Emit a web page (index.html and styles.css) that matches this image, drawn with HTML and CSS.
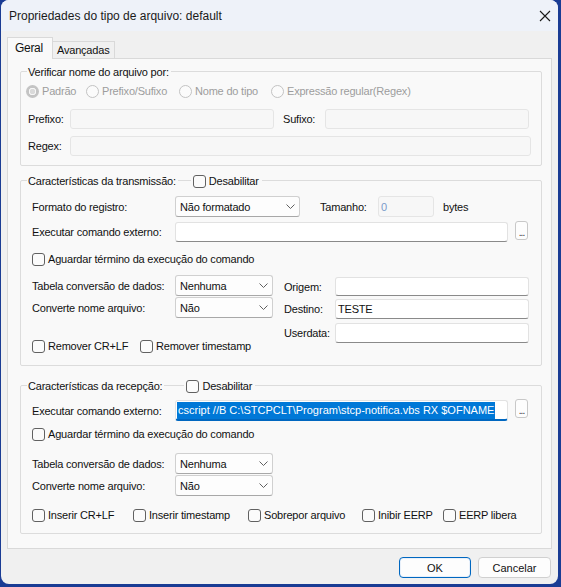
FILE: index.html
```html
<!DOCTYPE html>
<html lang="pt-BR">
<head>
    <meta charset="UTF-8">
    <meta name="viewport" content="width=device-width, initial-scale=1.0">
    <title>Propriedades do tipo de arquivo: default</title>
    <link rel="stylesheet" href="styles.css">
</head>
<body>
    <div class="window">
        <div class="titlebar">
            <span class="title">Propriedades do tipo de arquivo: default</span>
            <span class="close-btn">
                <svg width="12" height="12" viewBox="0 0 12 12"><path d="M1 1L11 11M11 1L1 11" stroke="#1a1a1a" stroke-width="1.1"/></svg>
            </span>
        </div>

        <div class="dialog-body">
            <div class="tabs">
                <div class="tab active">Geral</div>
                <div class="tab">Avançadas</div>
            </div>

            <div class="tab-panel">
                <!-- Verificação do nome do arquivo -->
                <div class="group group-name">
                    <div class="group-head">
                        <span class="group-title">Verificar nome do arquivo por:</span>
                    </div>
                    <div class="group-body">
                        <div class="radio-row">
                            <span class="radio radio-padrao"><span class="dot checked"></span>Padrão</span>
                            <span class="radio radio-prefixo"><span class="dot"></span>Prefixo/Sufixo</span>
                            <span class="radio radio-nome"><span class="dot"></span>Nome do tipo</span>
                            <span class="radio"><span class="dot"></span>Expressão regular(Regex)</span>
                        </div>
                        <div class="row row-prefix">
                            <span class="lbl lbl-short">Prefixo:</span>
                            <span class="input disabled input-half"></span>
                            <span class="lbl lbl-short lbl-suffix">Sufixo:</span>
                            <span class="input disabled input-half"></span>
                        </div>
                        <div class="row row-regex">
                            <span class="lbl lbl-short">Regex:</span>
                            <span class="input disabled input-regex"></span>
                        </div>
                    </div>
                </div>

                <!-- Transmissão -->
                <div class="group group-send">
                    <div class="group-head">
                        <span class="group-title">Características da transmissão:</span>
                        <span class="head-check"><span class="box"></span>Desabilitar</span>
                    </div>
                    <div class="group-body">
                        <div class="row row-format">
                            <span class="lbl lbl-wide">Formato do registro:</span>
                            <span class="combo combo-wide">Não formatado
                                <svg width="9" height="5" viewBox="0 0 9 5"><path d="M0.5 0.5L4.5 4.5L8.5 0.5" fill="none" stroke="#606060"/></svg>
                            </span>
                            <span class="lbl lbl-size">Tamanho:</span>
                            <span class="input disabled input-size">0</span>
                            <span class="unit">bytes</span>
                        </div>
                        <div class="row row-cmd">
                            <span class="lbl lbl-wide">Executar comando externo:</span>
                            <span class="input input-cmd"></span>
                            <span class="browse-btn">...</span>
                        </div>
                        <div class="check-row row-wait">
                            <span class="check"><span class="box"></span>Aguardar término da execução do comando</span>
                        </div>
                        <div class="split">
                            <div class="split-left">
                                <div class="row row-combo">
                                    <span class="lbl lbl-wide">Tabela conversão de dados:</span>
                                    <span class="combo combo-small">Nenhuma
                                        <svg width="9" height="5" viewBox="0 0 9 5"><path d="M0.5 0.5L4.5 4.5L8.5 0.5" fill="none" stroke="#606060"/></svg>
                                    </span>
                                </div>
                                <div class="row row-combo row-next">
                                    <span class="lbl lbl-wide">Converte nome arquivo:</span>
                                    <span class="combo combo-small">Não
                                        <svg width="9" height="5" viewBox="0 0 9 5"><path d="M0.5 0.5L4.5 4.5L8.5 0.5" fill="none" stroke="#606060"/></svg>
                                    </span>
                                </div>
                                <div class="check-row row-remove">
                                    <span class="check check-crlf"><span class="box"></span>Remover CR+LF</span>
                                    <span class="check"><span class="box"></span>Remover timestamp</span>
                                </div>
                            </div>
                            <div class="split-right">
                                <div class="row row-origin">
                                    <span class="lbl lbl-side">Origem:</span>
                                    <span class="input input-side"></span>
                                </div>
                                <div class="row row-dest">
                                    <span class="lbl lbl-side">Destino:</span>
                                    <span class="input input-side">TESTE</span>
                                </div>
                                <div class="row row-user">
                                    <span class="lbl lbl-side">Userdata:</span>
                                    <span class="input input-side"></span>
                                </div>
                            </div>
                        </div>
                    </div>
                </div>

                <!-- Recepção -->
                <div class="group group-recv">
                    <div class="group-head">
                        <span class="group-title">Características da recepção:</span>
                        <span class="head-check"><span class="box"></span>Desabilitar</span>
                    </div>
                    <div class="group-body">
                        <div class="row row-cmd-recv">
                            <span class="lbl lbl-wide">Executar comando externo:</span>
                            <span class="input input-cmd focused"><span class="selection">cscript //B C:\STCPCLT\Program\stcp-notifica.vbs RX $OFNAME</span></span>
                            <span class="browse-btn">...</span>
                        </div>
                        <div class="check-row row-wait-recv">
                            <span class="check"><span class="box"></span>Aguardar término da execução do comando</span>
                        </div>
                        <div class="row row-combo row-table-recv">
                            <span class="lbl lbl-wide">Tabela conversão de dados:</span>
                            <span class="combo combo-small">Nenhuma
                                <svg width="9" height="5" viewBox="0 0 9 5"><path d="M0.5 0.5L4.5 4.5L8.5 0.5" fill="none" stroke="#606060"/></svg>
                            </span>
                        </div>
                        <div class="row row-combo row-next">
                            <span class="lbl lbl-wide">Converte nome arquivo:</span>
                            <span class="combo combo-small">Não
                                <svg width="9" height="5" viewBox="0 0 9 5"><path d="M0.5 0.5L4.5 4.5L8.5 0.5" fill="none" stroke="#606060"/></svg>
                            </span>
                        </div>
                        <div class="check-row row-options">
                            <span class="check opt-crlf"><span class="box"></span>Inserir CR+LF</span>
                            <span class="check opt-stamp"><span class="box"></span>Inserir timestamp</span>
                            <span class="check opt-over"><span class="box"></span>Sobrepor arquivo</span>
                            <span class="check opt-eerp"><span class="box"></span>Inibir EERP</span>
                            <span class="check"><span class="box"></span>EERP libera</span>
                        </div>
                    </div>
                </div>
            </div>

            <div class="footer">
                <button type="button" class="btn btn-default">OK</button>
                <button type="button" class="btn btn-cancel">Cancelar</button>
            </div>
        </div>
    </div>
</body>
</html>
```

FILE: styles.css
```css
body {
    margin: 0;
    background-color: #1a3c94;
    font-family: "Liberation Sans", Arial, sans-serif;
    font-size: 11px;
    letter-spacing: -0.2px;
    color: #111;
}

.window {
    width: 557px;
    height: 584px;
    margin-left: 1px;
    background-color: #f0f0f0;
    border-radius: 8px;
    overflow: hidden;
}

/* Title bar */
.titlebar {
    height: 31px;
    display: flex;
    align-items: center;
    padding-left: 8px;
    background-color: #eef2f9;
}

.title {
    font-size: 12px;
    letter-spacing: 0;
    color: #1a1a1a;
}

.close-btn {
    margin-left: auto;
    margin-right: 7px;
    display: flex;
}

.dialog-body {
    padding: 6px 6px 0 6px;
}

/* Tabs */
.tabs {
    display: flex;
    align-items: flex-end;
    height: 21px;
}

.tab {
    box-sizing: border-box;
    border: 1px solid #d9d9d9;
    border-bottom: none;
}

.tab.active {
    width: 46px;
    height: 22px;
    margin-bottom: -1px;
    padding: 3px 0 0 7px;
    font-size: 12px;
    letter-spacing: -0.3px;
    background-color: #f9f9f9;
    position: relative;
    z-index: 1;
}

.tab:not(.active) {
    width: 62px;
    height: 17px;
    padding: 2px 0 0 4px;
    border-left: none;
    background-color: #f0f0f0;
}

.tab-panel {
    box-sizing: border-box;
    height: 491px;
    padding: 12px 0 0 12px;
    background-color: #f9f9f9;
    border: 1px solid #d9d9d9;
}

/* Group boxes */
.group {
    box-sizing: border-box;
    width: 522px;
    border: 1px solid #dcdcdc;
    border-radius: 2px;
}

.group-name {
    height: 95px;
}

.group-send {
    height: 186px;
    margin-top: 14px;
}

.group-recv {
    height: 149px;
    margin-top: 19px;
}

.group-head {
    display: flex;
    align-items: center;
    height: 16px;
    margin: -8px 0 0 6px;
}

.group-title {
    background-color: #f9f9f9;
    padding: 0 2px 0 1px;
}

.head-check {
    display: flex;
    align-items: center;
    background-color: #f9f9f9;
    padding: 0 3px 0 2px;
    margin-left: 13px;
}

.group-recv .head-check {
    margin-left: 20px;
}

.group-body {
    padding-left: 11px;
}

.group-name .group-body {
    padding-left: 7px;
}

/* Generic rows */
.row {
    display: flex;
    align-items: center;
}

.lbl {
    flex: none;
    white-space: nowrap;
}

.lbl-short {
    width: 42px;
}

.lbl-suffix {
    margin-left: 9px;
}

.lbl-wide {
    width: 143px;
}

.lbl-size {
    width: 58px;
    margin-left: 20px;
}

.lbl-side {
    width: 51px;
}

.unit {
    margin-left: 9px;
}

/* Radios */
.radio-row {
    display: flex;
    align-items: center;
    height: 16px;
    margin: 3px 0 0 -2px;
    color: #9d9d9d;
}

.radio {
    display: flex;
    align-items: center;
    flex: none;
}

.radio-padrao {
    width: 60px;
}

.radio-prefixo {
    width: 93px;
}

.radio-nome {
    width: 92px;
}

.dot {
    box-sizing: border-box;
    width: 13px;
    height: 13px;
    margin-right: 3px;
    border: 1px solid #c3c3c3;
    border-radius: 50%;
    background-color: #fbfbfb;
}

.dot.checked {
    border: none;
    background: radial-gradient(circle, #dadada 0 2.5px, #f7f7f7 3px 3.5px, #c4c4c4 4px);
}

/* Text inputs */
.input {
    box-sizing: border-box;
    display: flex;
    align-items: center;
    height: 20px;
    padding-left: 2px;
    background-color: #fff;
    border: 1px solid #e2e2e2;
    border-bottom-color: #8a8a8a;
    border-radius: 3px;
    white-space: nowrap;
    overflow: hidden;
}

.input.disabled {
    background-color: #f7f7f7;
    border-color: #e5e5e5;
    color: #7b9acb;
}

.row-prefix {
    height: 20px;
    margin-top: 10px;
}

.row-regex {
    height: 20px;
    margin-top: 7px;
}

.input-half {
    width: 204px;
}

.input-regex {
    width: 461px;
}

.input-size {
    width: 56px;
    height: 21px;
}

.input-cmd {
    width: 333px;
}

.input-side {
    width: 194px;
}

.input.focused {
    height: 21px;
    padding-left: 1px;
    border-bottom: 2px solid #0067c0;
}

.selection {
    background-color: #0078d7;
    color: #fff;
    letter-spacing: 0;
    line-height: 17px;
    padding: 0 1px;
}

/* Combo boxes */
.combo {
    box-sizing: border-box;
    display: flex;
    align-items: center;
    justify-content: space-between;
    height: 21px;
    padding: 0 4px 0 4px;
    background-color: #fdfdfd;
    border: 1px solid #d0d0d0;
    border-bottom-color: #a8a8a8;
    border-radius: 3px;
}

.combo-wide {
    width: 125px;
}

.combo-small {
    width: 98px;
}

.browse-btn {
    box-sizing: border-box;
    width: 13px;
    height: 19px;
    margin-left: 7px;
    align-self: flex-start;
    margin-top: -1px;
    border: 1px solid #c8c8c8;
    border-radius: 3px;
    background-color: #fdfdfd;
    font-size: 10px;
    letter-spacing: -1px;
    line-height: 22px;
    text-align: center;
    color: #333;
}

/* Checkboxes */
.check-row {
    display: flex;
    align-items: center;
    height: 14px;
}

.check {
    display: flex;
    align-items: center;
    flex: none;
}

.box {
    box-sizing: border-box;
    width: 13px;
    height: 13px;
    margin-right: 3px;
    border: 1px solid #616161;
    border-radius: 3px;
    background-color: #fbfbfb;
}

/* Transmissão rows */
.row-format {
    height: 21px;
    margin-top: 7px;
}

.row-cmd {
    height: 20px;
    margin-top: 5px;
}

.row-wait {
    margin-top: 10px;
}

.split {
    display: grid;
    grid-template-columns: 252px 1fr;
    margin-top: 9px;
}

.row-combo {
    height: 21px;
}

.row-next {
    margin-top: 1px;
}

.row-remove {
    margin-top: 21px;
}

.check-crlf {
    width: 108px;
}

.row-origin {
    height: 19px;
    margin-top: 2px;
}

.row-origin .input {
    height: 19px;
}

.row-dest {
    height: 20px;
    margin-top: 3px;
}

.row-user {
    height: 20px;
    margin-top: 4px;
}

/* Recepção rows */
.row-cmd-recv {
    height: 21px;
    margin-top: 6px;
}

.row-wait-recv {
    margin-top: 6px;
}

.row-table-recv {
    margin-top: 12px;
}

.row-options {
    margin-top: 12px;
}

.opt-crlf {
    width: 101px;
}

.opt-stamp {
    width: 115px;
}

.opt-over {
    width: 114px;
}

.opt-eerp {
    width: 81px;
}

/* Footer buttons */
.footer {
    display: flex;
    justify-content: flex-end;
    gap: 7px;
    margin-top: 8px;
    padding-right: 1px;
}

.btn {
    box-sizing: border-box;
    height: 21px;
    padding: 0;
    font-family: "Liberation Sans", Arial, sans-serif;
    font-size: 11px;
    color: #111;
    background-color: #fdfdfd;
    border: 1px solid #d0d0d0;
    border-radius: 4px;
}

.btn-default {
    width: 72px;
    border-color: #0067c0;
    box-shadow: inset 0 0 0 1px #e8f0fa;
}

.btn-cancel {
    width: 73px;
}
```
